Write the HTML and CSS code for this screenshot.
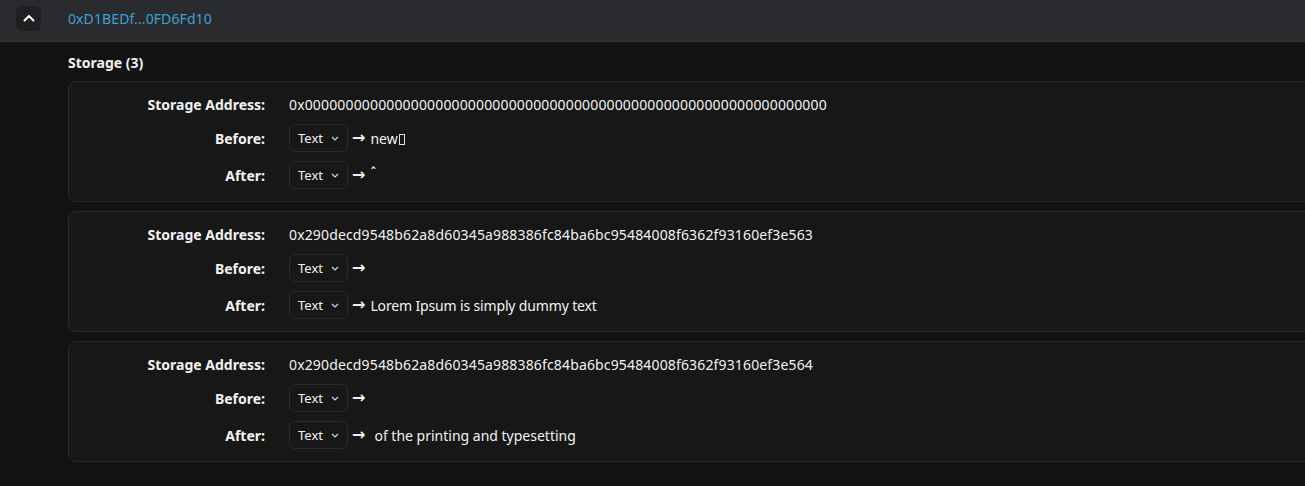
FILE: index.html
```html
<!DOCTYPE html>
<html>
<head>
<meta charset="utf-8">
<link rel="stylesheet" href="styles.css">
</head>
<body>
<header class="bar">
  <button class="toggle" aria-label="collapse">
    <svg width="12" height="8" viewBox="0 0 12 8"><path d="M1.5 6.5 L6 2 L10.5 6.5" fill="none" stroke="#fff" stroke-width="2" stroke-linecap="round" stroke-linejoin="round"/></svg>
  </button>
  <a class="addr-link">0xD1BEDf...0FD6Fd10</a>
</header>
<main class="content">
  <h3 class="title">Storage (3)</h3>
  <div class="cards">
    <section class="card">
      <div class="label">Storage Address:</div>
      <div class="value hash">0x0000000000000000000000000000000000000000000000000000000000000000</div>
      <div class="label">Before:</div>
      <div class="value row"><span class="select">Text <svg class="chev" width="8" height="5" viewBox="0 0 8 5"><path d="M1 1 L4 4 L7 1" fill="none" stroke="currentColor" stroke-width="1.2"/></svg></span><span class="arrow">→</span><span>new<span class="tofu"></span></span></div>
      <div class="label">After:</div>
      <div class="value row"><span class="select">Text <svg class="chev" width="8" height="5" viewBox="0 0 8 5"><path d="M1 1 L4 4 L7 1" fill="none" stroke="currentColor" stroke-width="1.2"/></svg></span><span class="arrow">→</span><span class="caret">ˆ</span></div>
    </section>
    <section class="card">
      <div class="label">Storage Address:</div>
      <div class="value hash">0x290decd9548b62a8d60345a988386fc84ba6bc95484008f6362f93160ef3e563</div>
      <div class="label">Before:</div>
      <div class="value row"><span class="select">Text <svg class="chev" width="8" height="5" viewBox="0 0 8 5"><path d="M1 1 L4 4 L7 1" fill="none" stroke="currentColor" stroke-width="1.2"/></svg></span><span class="arrow">→</span></div>
      <div class="label">After:</div>
      <div class="value row"><span class="select">Text <svg class="chev" width="8" height="5" viewBox="0 0 8 5"><path d="M1 1 L4 4 L7 1" fill="none" stroke="currentColor" stroke-width="1.2"/></svg></span><span class="arrow">→</span><span class="txt">Lorem Ipsum is simply dummy text</span></div>
    </section>
    <section class="card">
      <div class="label">Storage Address:</div>
      <div class="value hash">0x290decd9548b62a8d60345a988386fc84ba6bc95484008f6362f93160ef3e564</div>
      <div class="label">Before:</div>
      <div class="value row"><span class="select">Text <svg class="chev" width="8" height="5" viewBox="0 0 8 5"><path d="M1 1 L4 4 L7 1" fill="none" stroke="currentColor" stroke-width="1.2"/></svg></span><span class="arrow">→</span></div>
      <div class="label">After:</div>
      <div class="value row"><span class="select">Text <svg class="chev" width="8" height="5" viewBox="0 0 8 5"><path d="M1 1 L4 4 L7 1" fill="none" stroke="currentColor" stroke-width="1.2"/></svg></span><span class="arrow">→</span><span class="lead">of the printing and typesetting</span></div>
    </section>
  </div>
</main>
</body>
</html>
```

FILE: styles.css
```css
* { box-sizing: border-box; }
html, body { margin: 0; padding: 0; }
body {
  background: #121212;
  color: #f2f2f2;
  font-family: "Noto Sans", "Open Sans", sans-serif;
  font-size: 14px;
  overflow: hidden;
}
.bar {
  height: 42px;
  background: #2a2b2e;
  border-bottom: 1px solid #323336;
  display: flex;
  align-items: center;
  padding-left: 16px;
}
.toggle {
  width: 25px;
  height: 25px;
  border: none;
  border-radius: 6px;
  background: #1f2022;
  display: flex;
  align-items: center;
  justify-content: center;
  padding: 0;
  margin-top: -5px;
}
.addr-link {
  margin-left: 27px;
  color: #3ba2d8;
  font-size: 14px;
  letter-spacing: 0.1px;
  margin-top: -5px;
}
.content {
  padding: 11px 0 0 68px;
}
.title {
  margin: 0 0 9px;
  font-size: 14px;
  font-weight: 700;
  line-height: 19px;
}
.cards {
  display: flex;
  flex-direction: column;
  gap: 9px;
}
.card {
  width: 1260px;
  background: #171717;
  border: 1px solid #2a2a2a;
  border-radius: 8px;
  padding: 12px 0;
  display: grid;
  grid-template-columns: 196px 1fr;
  column-gap: 24px;
  row-gap: 9px;
  align-items: center;
}
.label {
  text-align: right;
  font-weight: 700;
  line-height: 21px;
}
.value {
  line-height: 21px;
  white-space: nowrap;
}
.value.hash {
  letter-spacing: 0.15px;
  margin-top: -1px;
}
.value.row {
  display: flex;
  align-items: center;
  height: 28px;
}
.select {
  display: inline-flex;
  align-items: center;
  width: 59px;
  height: 28px;
  border: 1px solid #2a2a2a;
  border-radius: 6px;
  padding-left: 8px;
  font-size: 13px;
  color: #f2f2f2;
}
.chev {
  margin-left: 8px;
  color: #d8d8d8;
}
.arrow {
  font-family: "DejaVu Sans", sans-serif;
  font-weight: 700;
  font-size: 16px;
  line-height: 20px;
  margin: 0 5px 0 4px;
}
.txt { letter-spacing: -0.15px; }
.tofu {
  display: inline-block;
  width: 6px;
  height: 11px;
  border: 1px solid #e0e0e0;
  margin-left: 1px;
  vertical-align: -1px;
}
.caret {
  position: relative;
  top: -3px;
}
.lead { margin-left: 4px; }
```
